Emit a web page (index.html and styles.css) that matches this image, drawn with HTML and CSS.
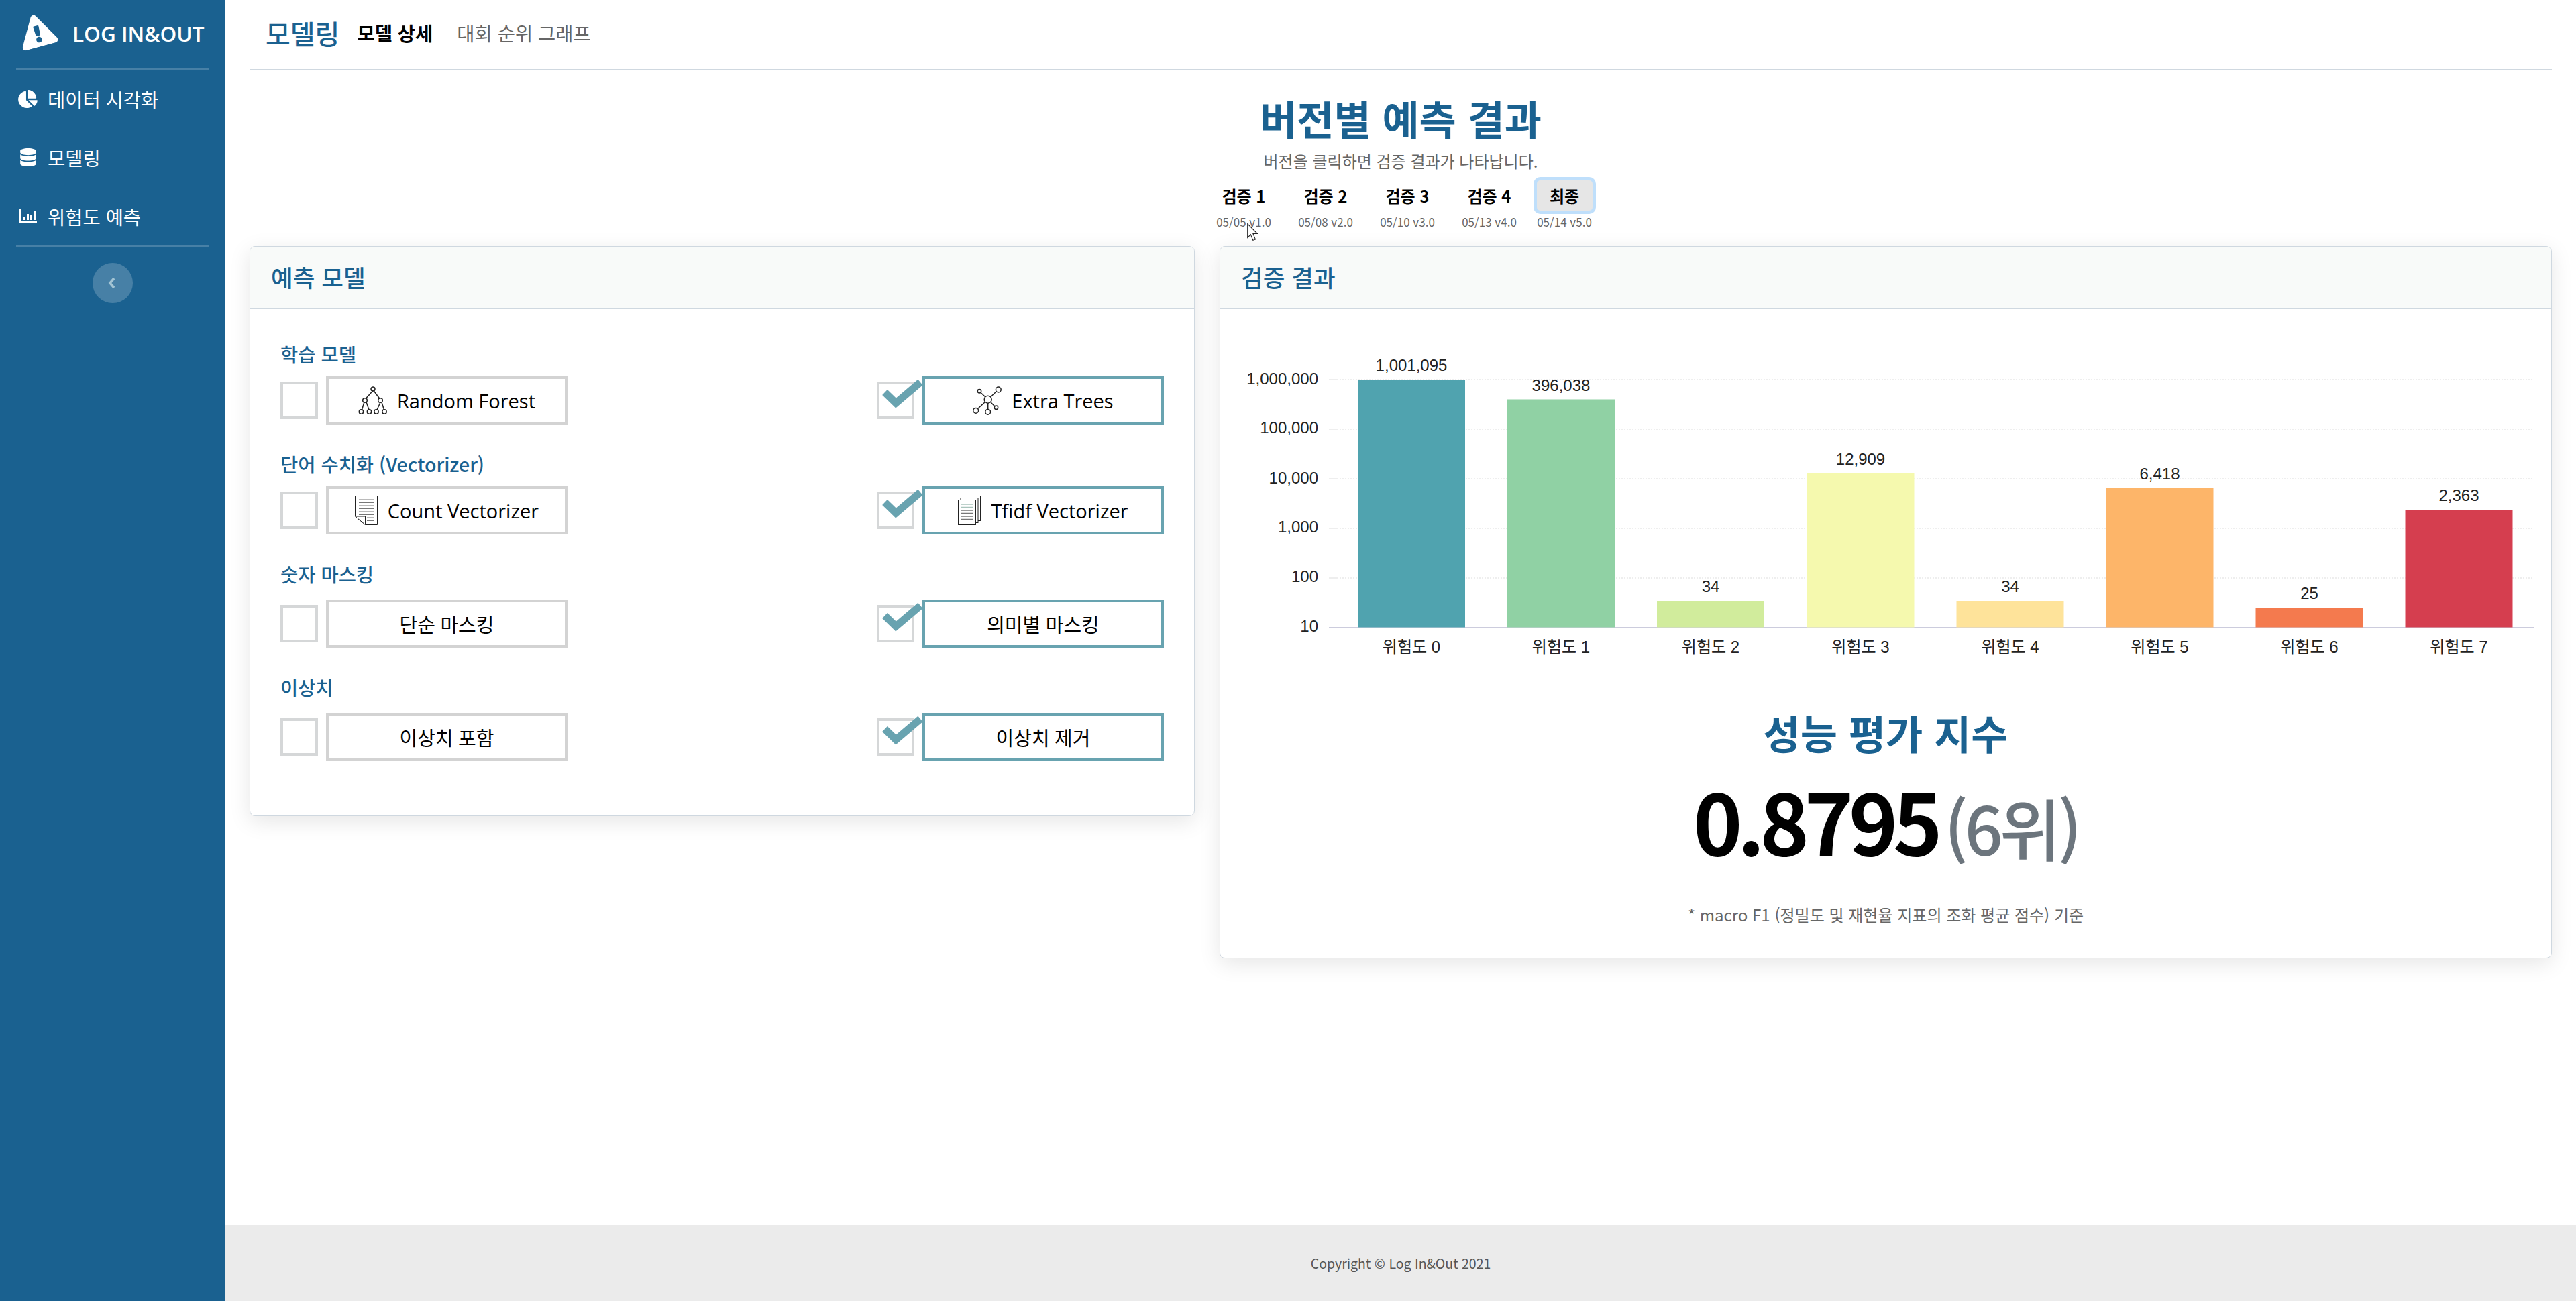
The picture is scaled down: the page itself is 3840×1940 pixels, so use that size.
FILE: index.html
```html
<!DOCTYPE html>
<html lang="ko">
<head>
<meta charset="utf-8">
<title>LOG IN&amp;OUT</title>
<link rel="stylesheet" href="styles.css">
</head>
<body>
<div class="app">
  <aside class="sidebar">
    <div class="brand">
      <svg class="brand-logo" viewBox="0 0 576 512"><path fill="#fff" d="M569.517 440.013C587.975 472.007 564.806 512 527.94 512H48.054c-36.937 0-59.999-40.055-41.577-71.987L246.423 24.035c18.467-32.009 64.72-31.951 83.154 0l239.94 416.007zM288 354c-25.405 0-46 20.595-46 46s20.595 46 46 46 46-20.595 46-46-20.595-46-46-46zm-43.673-165.346l7.418 136c.347 6.364 5.609 11.346 11.982 11.346h48.546c6.373 0 11.635-4.982 11.982-11.346l7.418-136c.375-6.874-5.098-12.654-11.982-12.654h-63.383c-6.884 0-12.356 5.78-11.981 12.654z"/></svg>
      <span class="brand-text">LOG IN&amp;OUT</span>
    </div>
    <hr class="side-rule">
    <nav class="nav">
      <a class="nav-item"><span class="nav-icon"><svg class="ico-pie" viewBox="0 0 544 512"><path fill="#fff" d="M527.79 288H290.5l158.03 158.03c6.04 6.04 15.98 6.53 22.19.68 38.7-36.46 65.32-85.61 73.13-140.86 1.34-9.46-6.51-17.85-16.06-17.85zm-15.83-64.8C503.72 103.74 408.26 8.28 288.8.04 279.68-.59 272 7.1 272 16.24V240h223.77c9.14 0 16.82-7.68 16.19-16.8zM224 288V50.71c0-9.55-8.39-17.4-17.84-16.06C86.99 51.49-4.1 155.6.14 280.37 4.5 408.51 114.83 513.59 243.03 511.98c50.4-.63 96.97-16.87 135.26-44.03 7.9-5.6 8.42-17.23 1.57-24.08L224 288z"/></svg></span>데이터 시각화</a>
      <a class="nav-item"><span class="nav-icon"><svg class="ico-db" viewBox="0 0 448 512"><path fill="#fff" d="M448 73.143v45.714C448 159.143 347.667 192 224 192S0 159.143 0 118.857V73.143C0 32.857 100.333 0 224 0s224 32.857 224 73.143zM448 176v102.857C448 319.143 347.667 352 224 352S0 319.143 0 278.857V176c48.125 33.143 136.208 48.572 224 48.572S399.874 209.143 448 176zm0 160v102.857C448 479.143 347.667 512 224 512S0 479.143 0 438.857V336c48.125 33.143 136.208 48.572 224 48.572S399.874 369.143 448 336z"/></svg></span>모델링</a>
      <a class="nav-item"><span class="nav-icon"><svg class="ico-bars" viewBox="0 0 27 20"><path fill="#fff" d="M0 0h3v17h24v3H0zM7 11h3v5H7zM12 7h3v9h-3zM17 9h3v7h-3zM22 3h3v13h-3z"/></svg></span>위험도 예측</a>
    </nav>
    <hr class="side-rule">
    <button class="side-toggle"><svg class="toggle-ico" viewBox="0 0 12 18"><path d="M9 2 3 9l6 7" fill="none" stroke="#a3c4d4" stroke-width="3.6"/></svg></button>
  </aside>

  <div class="content">
    <div class="page">
      <header class="topbar">
        <h1 class="top-title">모델링</h1>
        <a class="tab tab-active">모델 상세</a>
        <span class="tab-sep"></span>
        <a class="tab">대회 순위 그래프</a>
      </header>

      <section class="intro">
        <h2 class="intro-title">버전별 예측 결과</h2>
        <p class="intro-sub">버전을 클릭하면 검증 결과가 나타납니다.</p>
        <div class="versions">
          <div class="ver"><div class="ver-btn">검증 1</div><div class="ver-date">05/05 v1.0</div>
            <svg class="cursor" viewBox="0 0 18 27"><path d="M.7.8v20.6l4.7-4.6 3.4 8.6 3.6-1.5-3.5-8.4h6.6z" fill="#fff" stroke="#222" stroke-width="1.1"/></svg>
          </div>
          <div class="ver"><div class="ver-btn">검증 2</div><div class="ver-date">05/08 v2.0</div></div>
          <div class="ver"><div class="ver-btn">검증 3</div><div class="ver-date">05/10 v3.0</div></div>
          <div class="ver"><div class="ver-btn">검증 4</div><div class="ver-date">05/13 v4.0</div></div>
          <div class="ver ver-last"><div class="ver-btn ver-active">최종</div><div class="ver-date">05/14 v5.0</div></div>
        </div>
      </section>

      <div class="cards">
        <section class="card card-left">
          <h3 class="card-head">예측 모델</h3>
          <div class="card-body">
            <div class="sec">
              <div class="sec-label lbl-tight">학습 모델</div>
              <div class="opts">
                <div class="opt"><span class="box"></span><div class="opt-btn">
                  <svg class="ico-tree" viewBox="0 0 43 42"><g fill="none" stroke="#222" stroke-width="1.5"><path d="M22 6 11 18M23 6l9 12M9 23 5.500 34.500M12 23l4 11.500M33 23.500 28 34.500M35 23.500l3.500 11"/><circle cx="22" cy="3.500" r="3"/><circle cx="10" cy="20.500" r="3.300"/><circle cx="33" cy="20.500" r="3.300"/><circle cx="4.500" cy="37.500" r="3.200"/><circle cx="16.500" cy="37.500" r="3.200"/><circle cx="27" cy="37.500" r="3.200"/><circle cx="39" cy="37.500" r="3.200"/></g></svg>
                  <span>Random Forest</span></div></div>
                <div class="opt"><span class="box"><svg class="check" viewBox="0 0 68 52"><path d="M5 19 21.500 35 58 4" fill="none" stroke="#68a3b0" stroke-width="11"/></svg></span><div class="opt-btn opt-on">
                  <svg class="ico-net" viewBox="0 0 43 43"><g fill="none" stroke="#222" stroke-width="1.500"><path d="M26.500 16 35.500 7.500M18.500 15.500 12 9.500M18.500 23.500 7.500 33.500M22.700 25v9.500M27 24l6 6"/><circle cx="22.700" cy="19.700" r="5.500"/><circle cx="38.300" cy="5" r="3.900"/><circle cx="10" cy="7.300" r="2.700"/><circle cx="4.700" cy="36.300" r="3.900"/><circle cx="22.700" cy="38.300" r="3.900"/><circle cx="35" cy="31.700" r="2.700"/></g></svg>
                  <span>Extra Trees</span></div></div>
              </div>
            </div>
            <div class="sec">
              <div class="sec-label lbl-tight">단어 수치화 (Vectorizer)</div>
              <div class="opts">
                <div class="opt"><span class="box"></span><div class="opt-btn">
                  <svg class="ico-doc" viewBox="0 0 34 44"><path d="M.5.5h33v43h-18L.5 31z" fill="#fff" stroke="#222"/><path d="M.5 31h15v12.500z" fill="#fff" stroke="#222"/><path d="M6 6h23M6 10.500h23M6 15h23M6 19.500h23M6 24h23M6 28.500h23M18 33h11M18 37.500h11" stroke="#777" stroke-width="1.200"/></svg>
                  <span>Count Vectorizer</span></div></div>
                <div class="opt"><span class="box"><svg class="check" viewBox="0 0 68 52"><path d="M5 19 21.500 35 58 4" fill="none" stroke="#68a3b0" stroke-width="11"/></svg></span><div class="opt-btn opt-on">
                  <svg class="ico-doc" viewBox="0 0 34 44"><rect x="7.500" y=".5" width="26" height="37" fill="#fff" stroke="#222"/><rect x="4" y="3.500" width="26" height="37" fill="#fff" stroke="#222"/><rect x=".5" y="6.500" width="26" height="37" fill="#fff" stroke="#222"/><path d="M5 13h18M5 17.500h18" stroke="#a9c4bc" stroke-width="1.300"/><path d="M5 22h18M5 26.500h18M5 31h18M5 35.500h18" stroke="#777" stroke-width="1.300"/></svg>
                  <span>Tfidf Vectorizer</span></div></div>
              </div>
            </div>
            <div class="sec">
              <div class="sec-label">숫자 마스킹</div>
              <div class="opts">
                <div class="opt"><span class="box"></span><div class="opt-btn"><span>단순 마스킹</span></div></div>
                <div class="opt"><span class="box"><svg class="check" viewBox="0 0 68 52"><path d="M5 19 21.500 35 58 4" fill="none" stroke="#68a3b0" stroke-width="11"/></svg></span><div class="opt-btn opt-on"><span>의미별 마스킹</span></div></div>
              </div>
            </div>
            <div class="sec sec-end">
              <div class="sec-label">이상치</div>
              <div class="opts">
                <div class="opt"><span class="box"></span><div class="opt-btn"><span>이상치 포함</span></div></div>
                <div class="opt"><span class="box"><svg class="check" viewBox="0 0 68 52"><path d="M5 19 21.500 35 58 4" fill="none" stroke="#68a3b0" stroke-width="11"/></svg></span><div class="opt-btn opt-on"><span>이상치 제거</span></div></div>
              </div>
            </div>
          </div>
        </section>

        <section class="card card-right">
          <h3 class="card-head">검증 결과</h3>
          <svg class="chart" viewBox="1819 461 1984 540" width="1984" height="540">
            <g class="grid">
              <path d="M1993 566H3778M1993 640H3778M1993 714H3778M1993 788H3778M1993 862H3778"/>
            </g>
            <path class="ticks" d="M1981 566h12M1981 640h12M1981 714h12M1981 788h12M1981 862h12"/>
            <path class="baseline" d="M1981 935.500H3778"/>
            <g class="bars">
              <rect x="2024" y="566" width="160" height="369.500" fill="#50a3af"/>
              <rect x="2247" y="595.500" width="160" height="340" fill="#90d1a4"/>
              <rect x="2470" y="896" width="160" height="39.500" fill="#d1ec9c"/>
              <rect x="2693.500" y="705.500" width="160" height="230" fill="#f5f9ae"/>
              <rect x="2916.500" y="896" width="160" height="39.500" fill="#fee39a"/>
              <rect x="3139.500" y="728" width="160" height="207.500" fill="#fdb569"/>
              <rect x="3362.500" y="906" width="160" height="29.500" fill="#f47a4e"/>
              <rect x="3585.500" y="760" width="160" height="175.500" fill="#d53e4f"/>
            </g>
            <g class="axis-y">
              <text x="1965" y="573">1,000,000</text>
              <text x="1965" y="646">100,000</text>
              <text x="1965" y="721">10,000</text>
              <text x="1965" y="794">1,000</text>
              <text x="1965" y="868">100</text>
              <text x="1965" y="942">10</text>
            </g>
            <g class="axis-v">
              <text x="2104" y="553">1,001,095</text>
              <text x="2327" y="583">396,038</text>
              <text x="2550" y="883">34</text>
              <text x="2773.500" y="693">12,909</text>
              <text x="2996.500" y="883">34</text>
              <text x="3219.500" y="715">6,418</text>
              <text x="3442.500" y="893">25</text>
              <text x="3665.500" y="747">2,363</text>
            </g>
            <g class="axis-x">
              <text x="2104" y="973">위험도 0</text>
              <text x="2327" y="973">위험도 1</text>
              <text x="2550" y="973">위험도 2</text>
              <text x="2773.500" y="973">위험도 3</text>
              <text x="2996.500" y="973">위험도 4</text>
              <text x="3219.500" y="973">위험도 5</text>
              <text x="3442.500" y="973">위험도 6</text>
              <text x="3665.500" y="973">위험도 7</text>
            </g>
          </svg>
          <div class="score-block">
            <div class="score-title">성능 평가 지수</div>
            <div class="score"><span class="score-num">0.8795</span><span class="score-rank">(6위)</span></div>
            <div class="score-note">* macro F1 (정밀도 및 재현율 지표의 조화 평균 점수) 기준</div>
          </div>
        </section>
      </div>
    </div>
    <footer class="footer">Copyright © Log In&amp;Out 2021</footer>
  </div>
</div>
</body>
</html>
```

FILE: styles.css
```css
* { box-sizing: border-box; }
html, body { margin: 0; height: 100%; }
body {
  font-family: "Noto Sans CJK KR", "Noto Sans", sans-serif;
  background: #fff;
  color: #000;
}
.app { display: flex; min-height: 1940px; }

/* sidebar */
.sidebar {
  width: 336px;
  flex: none;
  background: #1a6190;
  padding: 0 24px;
  display: flex;
  flex-direction: column;
  align-items: stretch;
}
.brand { display: flex; align-items: center; height: 102px; padding-left: 4px; }
.brand-logo { width: 54px; height: 48px; transform: rotate(-15deg); margin-top: -10px; flex: none; }
.brand-text {
  font-family: "Open Sans", sans-serif;
  font-weight: 600;
  font-size: 31.500px;
  color: #fff;
  margin-left: 26px;
  margin-top: -4px;
  white-space: nowrap;
}
.side-rule { width: 100%; height: 2px; margin: 0; border: 0; background: rgba(255,255,255,.2); flex: none; }
.nav { display: flex; flex-direction: column; height: 262px; }
.nav-item {
  height: 87.5px;
  display: flex;
  align-items: center;
  color: #fff;
  font-size: 28.500px;
  white-space: nowrap;
}
.nav-icon { width: 47px; display: flex; justify-content: center; flex: none; padding-right: 16px; margin-left: 2px; margin-right: -2px; }
.ico-pie { width: 29px; height: 27px; }
.ico-db { width: 24px; height: 27px; }
.ico-bars { width: 27px; height: 20px; }
.side-toggle {
  width: 60px; height: 60px;
  border-radius: 50%;
  border: 0;
  padding: 0;
  background: rgba(255,255,255,.2);
  margin: 24px auto 0;
  display: flex; align-items: center; justify-content: center;
}
.toggle-ico { width: 12px; height: 18px; margin-left: -2px; }

/* content */
.content { flex: 1; min-width: 0; display: flex; flex-direction: column; }
.page { flex: 1; padding: 0 36px; }
.topbar {
  height: 104px;
  border-bottom: 1px solid #cfd8e0;
  display: flex;
  align-items: center;
  padding: 0 0 6px 24px;
}
.top-title { margin: 0 26px 0 0; font-size: 40px; font-weight: 500; color: #1a6190; line-height: 1; }
.tab { font-size: 28.500px; color: #666; white-space: nowrap; }
.tab-active { color: #000; font-weight: 700; }
.tab-sep { width: 1px; height: 28px; background: #777; margin: 0 17px 0 18px; }

.intro { text-align: center; }
.intro-title { margin: 42px 0 0; font-size: 60px; line-height: 60px; font-weight: 700; color: #1a6190; }
.intro-sub { margin: 16px 0 0; font-size: 24px; line-height: 36px; color: #666; }
.versions { display: flex; justify-content: center; margin-top: 6px; height: 103px; }
.ver { width: 122px; display: flex; flex-direction: column; align-items: center; position: relative; }
.ver-last { width: 102px; }
.ver-btn { font-size: 24px; font-weight: 700; line-height: 45px; height: 45px; margin-top: 5px; color: #000; white-space: nowrap; }
.ver-active { width: 83px; background: #e6e6e6; border-radius: 5px; box-shadow: 0 0 0 5px #bfdffb; text-align: center; }
.ver-date { font-size: 17px; line-height: 24px; margin-top: 5px; color: #666; white-space: nowrap; }
.cursor { position: absolute; left: 66px; top: 69px; width: 18px; height: 27px; }

/* cards */
.cards { display: flex; align-items: flex-start; gap: 37px; }
.card {
  background: #fff;
  border: 1px solid #cfd8e0;
  border-radius: 8px;
  box-shadow: 0 8px 32px rgba(0,0,0,.1);
  overflow: hidden;
}
.card-left { width: 1409px; flex: none; }
.card-right { width: 1986px; flex: none; }
.card-head {
  margin: 0;
  height: 93px;
  background: #f8faf9;
  border-bottom: 1px solid #cfd8e0;
  color: #1a6190;
  font-size: 35.500px;
  font-weight: 500;
  line-height: 90px;
  padding-left: 31px;
}
.card-body { padding: 47px 45px 81px; }
.sec { margin-bottom: 39px; }
.sec-end { margin-bottom: 0; }
.sec-label { font-size: 28.500px; font-weight: 500; line-height: 40px; color: #1a6190; margin-bottom: 18px; white-space: nowrap; }
.lbl-tight { margin-bottom: 13px; }
.opts { display: flex; justify-content: space-between; }
.opt { display: flex; align-items: center; gap: 12px; }
.box { width: 56px; height: 56px; border: 4px solid #d5d7d8; position: relative; flex: none; }
.check { position: absolute; left: 3px; top: -7px; width: 68px; height: 52px; overflow: visible; }
.opt-btn {
  width: 360px; height: 72px;
  border: 4px solid #d3d3d3;
  display: flex; align-items: center; justify-content: center; gap: 15px;
  font-family: "Open Sans", "Noto Sans CJK KR", sans-serif;
  font-size: 29px;
  color: #000;
  white-space: nowrap;
}
.opt-on { border-color: #68a3b0; }
.ico-tree, .ico-net { width: 43px; height: 43px; flex: none; }
.ico-doc { width: 34px; height: 44px; flex: none; }

/* chart */
.chart { display: block; }
.grid path { stroke: #ddd; stroke-width: 1; stroke-dasharray: 2 2; fill: none; }
.ticks { stroke: #ddd; stroke-width: 1; fill: none; }
.baseline { stroke: #ccd; stroke-width: 1; fill: none; }
.axis-y text, .axis-v text, .axis-x text {
  font-family: "Liberation Sans", "Noto Sans CJK KR", sans-serif;
  font-size: 24px;
  fill: #222;
}
.axis-y text { text-anchor: end; }
.axis-v text, .axis-x text { text-anchor: middle; }

.score-block { text-align: center; padding-bottom: 46px; }
.score-title { margin-top: 51px; font-size: 60px; line-height: 80px; font-weight: 700; color: #1a6190; }
.score { margin-top: 20px; line-height: 140px; height: 140px; white-space: nowrap; }
.score-num { font-size: 125px; font-weight: 700; letter-spacing: -7.500px; color: #000; }
.score-rank { font-size: 100px; font-weight: 500; letter-spacing: -5px; color: #6c757d; margin-left: 10px; }
.score-note { margin-top: 54px; font-size: 24px; line-height: 36px; color: #666; }

/* footer */
.footer {
  height: 113px;
  background: #ebebeb;
  color: #555;
  font-size: 19.500px;
  display: flex;
  align-items: center;
  justify-content: center;
  flex: none;
}
```
